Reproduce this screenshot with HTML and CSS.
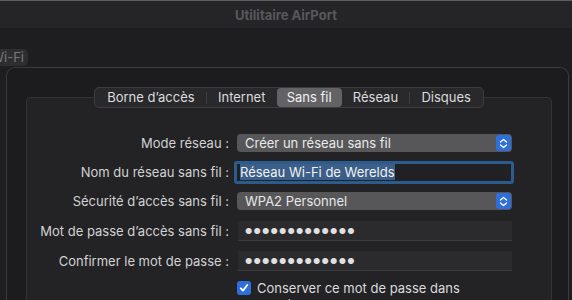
FILE: index.html
```html
<!DOCTYPE html>
<html lang="fr">
<head>
    <meta charset="UTF-8">
    <title>Utilitaire AirPort</title>
    <link rel="stylesheet" href="styles.css">
</head>
<body>
    <div class="titlebar">Utilitaire AirPort</div>

    <div class="doc-tabs">
        <div class="doc-tab">Wi-Fi</div>
    </div>

    <div class="panel">
        <div class="segmented">
            <span class="seg">Borne d’accès</span>
            <span class="sep"></span>
            <span class="seg">Internet</span>
            <span class="seg selected">Sans fil</span>
            <span class="seg">Réseau</span>
            <span class="sep"></span>
            <span class="seg">Disques</span>
        </div>

        <div class="box">
            <div class="row">
                <div class="label">Mode réseau :</div>
                <div class="popup">
                    <span>Créer un réseau sans fil</span>
                    <span class="stepper">
                        <svg width="9" height="11" viewBox="0 0 9 11"><path d="M1.5 4L4.5 1.5L7.5 4M1.5 7L4.5 9.5L7.5 7" fill="none" stroke="#fff" stroke-width="1.4" stroke-linecap="round" stroke-linejoin="round"/></svg>
                    </span>
                </div>
            </div>
            <div class="row short">
                <div class="label">Nom du réseau sans fil :</div>
                <div class="field focused"><span class="selection">Réseau Wi-Fi de Werelds</span></div>
            </div>
            <div class="row">
                <div class="label">Sécurité d’accès sans fil :</div>
                <div class="popup">
                    <span>WPA2 Personnel</span>
                    <span class="stepper">
                        <svg width="9" height="11" viewBox="0 0 9 11"><path d="M1.5 4L4.5 1.5L7.5 4M1.5 7L4.5 9.5L7.5 7" fill="none" stroke="#fff" stroke-width="1.4" stroke-linecap="round" stroke-linejoin="round"/></svg>
                    </span>
                </div>
            </div>
            <div class="row">
                <div class="label">Mot de passe d’accès sans fil :</div>
                <div class="field"><span class="dots">●●●●●●●●●●●●●</span></div>
            </div>
            <div class="row">
                <div class="label">Confirmer le mot de passe :</div>
                <div class="field"><span class="dots">●●●●●●●●●●●●●</span></div>
            </div>
            <div class="row check-row">
                <div class="label"></div>
                <label class="check">
                    <span class="checkbox">
                        <svg width="10" height="10" viewBox="0 0 10 10"><path d="M1.8 5.3L4 7.6L8.3 2" fill="none" stroke="#fff" stroke-width="1.8" stroke-linecap="round" stroke-linejoin="round"/></svg>
                    </span>
                    <span class="check-text">Conserver ce mot de passe dans mon trousseau</span>
                </label>
            </div>
        </div>
    </div>
</body>
</html>
```

FILE: styles.css
```css
body {
    margin: 0;
    background-color: #1e1e21;
    font-family: Inter, Roboto, "Liberation Sans", sans-serif;
    font-size: 13px;
    color: #d6d6d6;
    height: 300px;
    overflow: hidden;
}
.titlebar {
    height: 27px;
    border-top: 1px solid #5e5e60;
    background-color: #252528;
    color: #58585b;
    font-weight: bold;
    text-align: center;
    line-height: 28px;
    font-size: 13px;
}
.doc-tabs {
    height: 39px;
    display: flex;
    align-items: flex-end;
}
.doc-tab {
    margin-left: -10px;
    margin-bottom: 1px;
    padding: 0 4px 0 0;
    width: 38px;
    height: 17px;
    line-height: 17px;
    background-color: #2e2e31;
    border-radius: 0 5px 5px 0;
    color: #77777a;
    text-align: right;
    box-sizing: border-box;
}
.panel {
    margin: 0 3px 0 6px;
    border: 1px solid #3b3b3e;
    border-bottom: none;
    border-radius: 9px 9px 0 0;
    background-color: #1c1c1f;
    padding: 19px 16px 0 19px;
    height: 240px;
}
.segmented {
    position: relative;
    z-index: 1;
    width: 386px;
    height: 19px;
    margin: 0 auto -11px;
    display: flex;
    align-items: center;
    border: 1px solid #3d3d40;
    border-radius: 5px;
    background-color: #29292c;
    padding: 0 1px;
    box-sizing: content-box;
}
.seg {
    flex: 1 1 auto;
    text-align: center;
    height: 19px;
    line-height: 19px;
    color: #dcdcdc;
    border-radius: 4px;
}
.seg.selected {
    background-color: #636366;
    color: #f0f0f0;
    flex: 0 0 65px;
}
.sep {
    width: 1px;
    height: 12px;
    background-color: #3d3d40;
}
.box {
    border: 1px solid #333336;
    border-bottom: none;
    border-radius: 5px 5px 0 0;
    background-color: #232326;
    height: 230px;
    padding-top: 30px;
    box-sizing: border-box;
}
.row {
    display: flex;
    align-items: center;
    height: 30px;
}
.row.short {
    height: 28px;
}
.label {
    width: 202px;
    flex: 0 0 202px;
    text-align: right;
    color: #d2d2d2;
    white-space: nowrap;
}
.popup {
    margin-left: 8px;
    width: 275px;
    height: 18px;
    border-radius: 4px;
    background-color: #575759;
    display: flex;
    align-items: center;
    justify-content: space-between;
    padding-left: 8px;
    box-sizing: border-box;
    color: #e8e8e8;
}
.stepper {
    width: 15px;
    height: 16px;
    margin-right: 1px;
    background-color: #2e6fdc;
    border-radius: 3px;
    display: flex;
    align-items: center;
    justify-content: center;
}
.field {
    margin-left: 9px;
    width: 274px;
    height: 20px;
    background-color: #2b2b2e;
    border-bottom: 1px solid #3c3c3f;
    box-sizing: border-box;
    padding-left: 7px;
    display: flex;
    align-items: center;
}
.field.focused {
    margin-left: 5px;
    width: 280px;
    height: 23px;
    background-color: #212124;
    border: 3px solid #2a5c90;
    border-radius: 3px;
    padding-left: 3px;
}
.selection {
    background-color: #3b5f89;
    color: #f2f2f2;
    line-height: 16px;
}
.dots {
    font-size: 8px;
    letter-spacing: 1.2px;
    color: #e0e0e0;
}
.check-row {
    align-items: flex-start;
    height: 40px;
    padding-top: 4px;
}
.check {
    margin-left: 8px;
    display: flex;
    align-items: flex-start;
}
.checkbox {
    width: 14px;
    height: 14px;
    flex: 0 0 14px;
    border-radius: 3px;
    background-color: #2e6fdc;
    display: flex;
    align-items: center;
    justify-content: center;
    margin-top: 1px;
}
.check-text {
    margin-left: 6px;
    width: 215px;
    line-height: 16px;
    color: #dcdcdc;
}
```
